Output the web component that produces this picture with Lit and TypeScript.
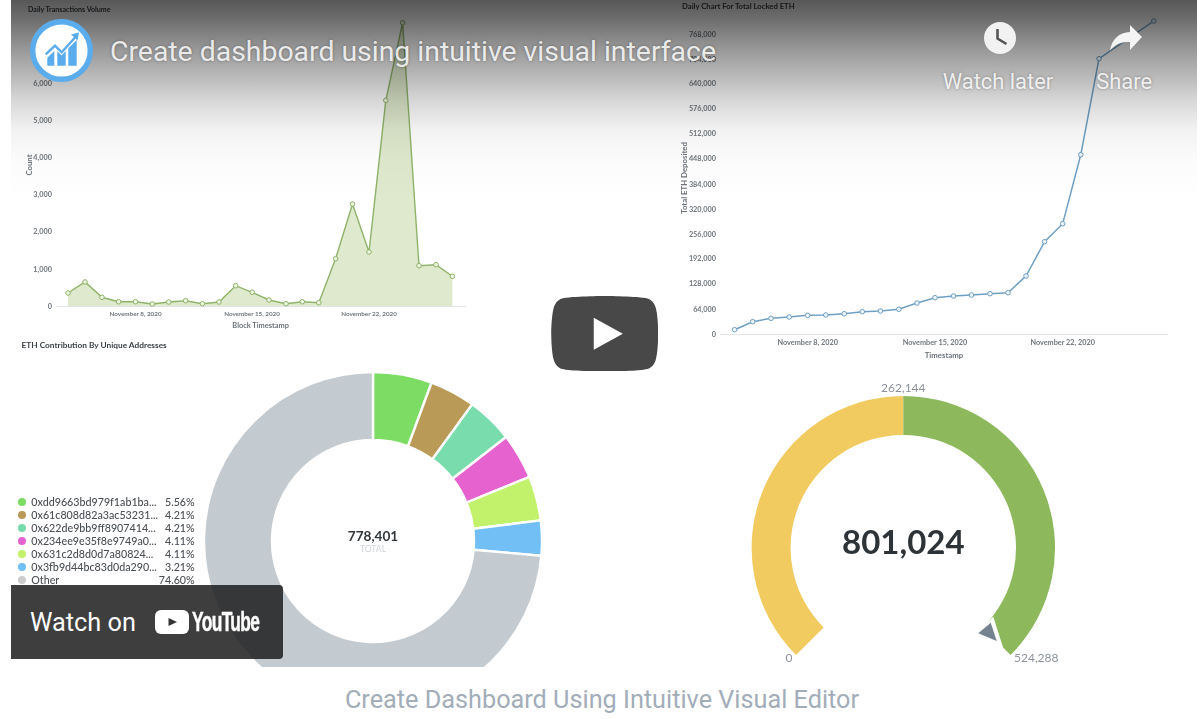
import { LitElement, html, css, svg } from "lit";
import { customElement } from "lit/decorators.js";

const CX = 362; // donut centre inside the frame
const CY = 541;

function wedge(cx: number, cy: number, R: number, r: number, a0: number, a1: number) {
  const p = (rad: number, a: number) => {
    const t = (a * Math.PI) / 180;
    return `${(cx + rad * Math.sin(t)).toFixed(2)} ${(cy - rad * Math.cos(t)).toFixed(2)}`;
  };
  const large = a1 - a0 > 180 ? 1 : 0;
  return `M${p(R, a0)}A${R} ${R} 0 ${large} 1 ${p(R, a1)}L${p(r, a1)}A${r} ${r} 0 ${large} 0 ${p(r, a0)}Z`;
}

const donut: [number, number, string][] = [
  [0, 20.3, "#7cdc63"],
  [20.3, 36, "#b99a56"],
  [36, 52, "#78dcac"],
  [52, 67.7, "#e663cf"],
  [67.7, 83, "#c2f26c"],
  [83, 95, "#71bff5"],
  [95, 360, "#c4cbd0"],
];

const legend: [string, string, string][] = [
  ["0xdd9663bd979f1ab1ba...", "5.56%", "#7cdc63"],
  ["0x61c808d82a3ac53231...", "4.21%", "#b99a56"],
  ["0x622de9bb9ff8907414...", "4.21%", "#78dcac"],
  ["0x234ee9e35f8e9749a0...", "4.11%", "#e663cf"],
  ["0x631c2d8d0d7a80824...", "4.11%", "#c2f26c"],
  ["0x3fb9d44bc83d0da290...", "3.21%", "#71bff5"],
  ["Other", "74.60%", "#cccccc"],
];

// Chart points, in frame coordinates (page x minus 11).
const leftPts: [number, number][] = [
  [57, 293], [74, 282], [91, 297.3], [107.6, 301.7], [124.5, 301.7], [141.3, 304],
  [157.8, 302], [174.6, 300.7], [191.4, 303.7], [208, 302], [224.7, 285.7], [241.2, 292.3],
  [258, 300], [275, 303.7], [291.3, 301.7], [307.8, 302.7], [324.6, 258.7], [341.5, 204],
  [358, 252], [374.8, 100.3], [391.6, 22.7], [408, 265.7], [425, 264.7], [441.4, 276.3],
];
const rightPts: [number, number][] = [
  [723.6, 329.7], [741.7, 321.7], [760, 318.3], [778.2, 317], [796.7, 315.3], [814.8, 315],
  [833.2, 313.7], [851.3, 311.7], [869.4, 311], [887.8, 309.3], [906, 303], [924, 297.7],
  [942.5, 296], [960.5, 295], [979, 293.7], [997, 292.7], [1015, 276], [1033.6, 241.7],
  [1051.7, 223.7], [1069.8, 154.7], [1088, 58.7], [1142.8, 21],
];
const leftTicks: [string, number][] = [
  ["6,000", 83], ["5,000", 120], ["4,000", 157.5], ["3,000", 194.5], ["2,000", 231.7], ["1,000", 269], ["0", 306],
];
const rightTicks: [string, number][] = [
  ["768,000", 34], ["704,000", 59], ["640,000", 83.5], ["576,000", 108.5], ["512,000", 133.5], ["448,000", 158.7],
  ["384,000", 184], ["320,000", 209], ["256,000", 234], ["192,000", 258.7], ["128,000", 283.7], ["64,000", 309], ["0", 334],
];

const toLine = (pts: [number, number][]) => pts.map((p) => p.join(",")).join(" ");

@customElement("app-root")
export class AppRoot extends LitElement {
  static styles = css`
    :host {
      display: block;
      width: 1200px;
      height: 719px;
      background: #fff;
      overflow: hidden;
    }
    .frame {
      position: relative;
      margin-left: 11px;
      width: 1186px;
      height: 667px;
      overflow: hidden;
      background: #fff;
    }
    .scene {
      display: block;
      width: 1186px;
      height: 667px;
      filter: blur(0.45px);
      font-family: Lato, "Liberation Sans", sans-serif;
    }
    .chart-title { font-size: 7.1px; font-weight: 700; fill: #3b4148; }
    .chart-title.wide { font-size: 7.7px; }
    .chart-title.eth { font-size: 8.3px; }
    .tick { font-size: 7.3px; font-weight: 700; fill: #70777e; }
    .tick.small { font-size: 6.3px; }
    .axis { font-size: 7.8px; font-weight: 700; fill: #6c737b; }
    .axis.block { font-size: 7.4px; }
    .legend { font-size: 10.7px; fill: #4a4f54; font-weight: 500; }
    .total { font-size: 13.6px; font-weight: 700; fill: #33383d; }
    .total-label { font-size: 8.6px; fill: #cfd2d5; }
    .gauge-label { font-size: 12px; fill: #8c939b; }
    .gauge-value { font-size: 33px; font-weight: 700; fill: #2e3338; }

    .shade {
      position: absolute;
      left: 0;
      top: 0;
      right: 0;
      height: 200px;
      background: linear-gradient(
        180deg,
        rgba(0, 0, 0, 0.66) 0%,
        rgba(0, 0, 0, 0.57) 10%,
        rgba(0, 0, 0, 0.4) 25%,
        rgba(0, 0, 0, 0.16) 50%,
        rgba(0, 0, 0, 0.05) 65%,
        rgba(0, 0, 0, 0.015) 80%,
        rgba(0, 0, 0, 0) 100%
      );
    }
    .top {
      position: absolute;
      left: 0;
      top: 0;
      right: 0;
      height: 100px;
      display: flex;
      font-family: Roboto, "Liberation Sans", sans-serif;
      color: rgba(255, 255, 255, 0.86);
      text-shadow: 0 0 3px rgba(0, 0, 0, 0.35);
    }
    .channel {
      flex: none;
      width: 63px;
      height: 63px;
      margin: 19px 0 0 19px;
    }
    .title {
      flex: none;
      margin: 35px 0 0 17px;
      font-size: 28.4px;
      line-height: 34px;
      white-space: nowrap;
    }
    .actions {
      margin-left: auto;
      display: flex;
      gap: 43px;
      padding: 22px 45px 0 0;
    }
    .action {
      display: flex;
      flex-direction: column;
      align-items: center;
      gap: 15px;
      font-size: 21.9px;
      line-height: 26px;
    }
    .action svg { display: block; height: 32px; margin-left: 4px; }

    .play {
      position: absolute;
      left: 539.5px;
      top: 295.5px;
      width: 107.5px;
      height: 75.5px;
    }
    .watch {
      position: absolute;
      left: 0;
      top: 585px;
      width: 272px;
      height: 74px;
      box-sizing: border-box;
      padding: 0 0 0 19px;
      display: flex;
      align-items: center;
      background: rgba(30, 30, 30, 0.86);
      border-radius: 0 4px 4px 0;
      color: #fff;
      font-family: Roboto, "Liberation Sans", sans-serif;
    }
    .watch-text { font-size: 25.3px; width: 125px; flex: none; white-space: nowrap; }
    .yt-logo { width: 34px; height: 24px; flex: none; }
    .yt-word {
      font-family: "Liberation Sans", Arial, sans-serif;
      font-weight: 700;
      font-size: 28px;
      letter-spacing: -1px;
      line-height: 28px;
      margin-left: 3px;
      -webkit-text-stroke: 0.5px #fff;
      transform: scaleX(0.62);
      transform-origin: left center;
      white-space: nowrap;
    }
    .caption {
      margin: 0;
      padding-top: 18px;
      width: 1204px;
      text-align: center;
      font-family: Roboto, "Liberation Sans", sans-serif;
      font-size: 25.25px;
      line-height: 30px;
      color: #a2adb9;
      white-space: nowrap;
    }
  `;

  render() {
    return html`
      <div class="frame">
        <svg class="scene" viewBox="0 0 1186 667" xmlns="http://www.w3.org/2000/svg">
          ${this.leftChart()} ${this.rightChart()} ${this.donutChart()} ${this.gauge()}
        </svg>
        <div class="shade"></div>
        <div class="top">
          <svg class="channel" viewBox="0 0 63 63">
            <circle cx="31.5" cy="31.5" r="28.8" fill="#fff" stroke="#5aaced" stroke-width="5.4"></circle>
            <path d="M17.3 46.7V38.7L24.3 32V46.7Z M27.3 46.7V32L31.5 36.5L35.7 32V46.7Z M38.3 46.7V29.3L46.7 21V46.7Z" fill="#5aaced"></path>
            <path d="M15.7 35.3L25 26.7L31.7 33.3L45 18.5" fill="none" stroke="#5aaced" stroke-width="2.4"></path>
            <path d="M41 15.5L49 13.5L47.5 21.5Z" fill="#5aaced"></path>
          </svg>
          <div class="title">Create dashboard using intuitive visual interface</div>
          <div class="actions">
            <div class="action">
              <svg viewBox="0 0 32 32" width="32">
                <circle cx="16" cy="16" r="16" fill="#f2f2f2"></circle>
                <path d="M13.5 7V16.5L22.5 22" fill="none" stroke="#555" stroke-width="2.6"></path>
              </svg>
              <span>Watch later</span>
            </div>
            <div class="action">
              <svg viewBox="0 -3 32 32" width="32">
                <path d="M20 0L32 12 20 25V17C12 16.5 5 19 0 25.5 2 14 9 7.5 20 7Z" fill="#f4f4f4"></path>
              </svg>
              <span>Share</span>
            </div>
          </div>
        </div>
        <svg class="play" viewBox="0 0 68 48">
          <path d="M66.52,7.74c-0.78-2.93-2.49-5.41-5.42-6.19C55.79,.13,34,0,34,0S12.21,.13,6.9,1.55C3.97,2.33,2.27,4.81,1.48,7.74C0.06,13.05,0,24,0,24s0.06,10.95,1.48,16.26c0.78,2.93,2.49,5.41,5.42,6.19C12.21,47.87,34,48,34,48s21.79-0.13,27.1-1.55c2.93-0.78,4.64-3.26,5.42-6.19C67.94,34.95,68,24,68,24S67.94,13.05,66.52,7.74z" fill="#484848"></path>
          <path d="M45.5 24L27 13.8V34.2Z" fill="#fff"></path>
        </svg>
        <div class="watch">
          <span class="watch-text">Watch on</span>
          <svg class="yt-logo" viewBox="0 0 34 24">
            <rect width="34" height="24" rx="6" fill="#fff"></rect>
            <path d="M13.5 8L22 12 13.5 16Z" fill="#333"></path>
          </svg>
          <span class="yt-word">YouTube</span>
        </div>
      </div>
      <p class="caption">Create Dashboard Using Intuitive Visual Editor</p>
    `;
  }

  private leftChart() {
    const area = `57,306 ${toLine(leftPts)} 441.4,306`;
    return svg`
      <text class="chart-title" x="17" y="12">Daily Transactions Volume</text>
      <polygon points=${area} fill="#dfe9cd"></polygon>
      <line x1="45" y1="306.5" x2="455" y2="306.5" stroke="#e3e6e8"></line>
      <polyline points=${toLine(leftPts)} fill="none" stroke="#8fb36a" stroke-width="1.4"></polyline>
      ${leftPts.map((p) => svg`<circle cx=${p[0]} cy=${p[1]} r="2.3" fill="#eef4e2" stroke="#8fb36a" stroke-width="1"></circle>`)}
      ${leftTicks.map((t) => svg`<text class="tick" x="41" y=${t[1] + 2.5} text-anchor="end">${t[0]}</text>`)}
      <text class="axis" transform="translate(21,165) rotate(-90)" text-anchor="middle">Count</text>
      <text class="tick small" x="124.5" y="315.5" text-anchor="middle">November 8, 2020</text>
      <text class="tick small" x="241" y="315.5" text-anchor="middle">November 15, 2020</text>
      <text class="tick small" x="358" y="315.5" text-anchor="middle">November 22, 2020</text>
      <text class="axis block" x="249.6" y="328" text-anchor="middle">Block Timestamp</text>
    `;
  }

  private rightChart() {
    return svg`
      <text class="chart-title wide" x="671" y="9">Daily Chart For Total Locked ETH</text>
      <line x1="709" y1="334.5" x2="1157" y2="334.5" stroke="#e3e6e8"></line>
      <polyline points=${toLine(rightPts)} fill="none" stroke="#6f9fc3" stroke-width="1.5"></polyline>
      ${rightPts.map((p) => svg`<circle cx=${p[0]} cy=${p[1]} r="2.3" fill="#eef5fa" stroke="#6f9fc3" stroke-width="1"></circle>`)}
      ${rightTicks.map((t) => svg`<text class="tick" x="705" y=${t[1] + 2.5} text-anchor="end">${t[0]}</text>`)}
      <text class="axis" transform="translate(675.5,178) rotate(-90)" text-anchor="middle">Total ETH Deposited</text>
      <text class="tick" x="796.7" y="345" text-anchor="middle">November 8, 2020</text>
      <text class="tick" x="924" y="345" text-anchor="middle">November 15, 2020</text>
      <text class="tick" x="1051.7" y="345" text-anchor="middle">November 22, 2020</text>
      <text class="axis" x="933" y="358" text-anchor="middle">Timestamp</text>
    `;
  }

  private donutChart() {
    return svg`
      <text class="chart-title eth" x="10.5" y="348">ETH Contribution By Unique Addresses</text>
      ${donut.map(([a, b, c]) => svg`<path d=${wedge(CX, CY, 169, 101, a, b)} fill=${c} stroke="#fff" stroke-width="2.4"></path>`)}
      <text class="total" x=${CX} y="541" text-anchor="middle">778,401</text>
      <text class="total-label" x=${CX} y="552" text-anchor="middle">TOTAL</text>
      ${legend.map(
        ([name, pct, color], i) => svg`
          <circle cx="11" cy=${502 + i * 13} r="4" fill=${color}></circle>
          <text class="legend" x="20.3" y=${506 + i * 13}>${name}</text>
          <text class="legend" x="183.7" y=${506 + i * 13} text-anchor="end">${pct}</text>
        `
      )}
    `;
  }

  private gauge() {
    const cx = 892.3;
    const cy = 547.7;
    return svg`
      <path d=${wedge(cx, cy, 151.7, 112.7, -135, 0)} fill="#f1cb60"></path>
      <path d=${wedge(cx, cy, 151.7, 112.7, 0, 135)} fill="#8db85c"></path>
      <polygon points="970,628 982.3,616.7 992.3,648.3 1000,657" fill="#fff"></polygon>
      <polygon points="967.3,633.3 979.7,622.7 985.7,641" fill="#74838f"></polygon>
      <text class="gauge-label" x="892.3" y="391.5" text-anchor="middle">262,144</text>
      <text class="gauge-label" x="778" y="661.5" text-anchor="middle">0</text>
      <text class="gauge-label" x="1003" y="661.5">524,288</text>
      <text class="gauge-value" x="892.3" y="554" text-anchor="middle">801,024</text>
    `;
  }
}
